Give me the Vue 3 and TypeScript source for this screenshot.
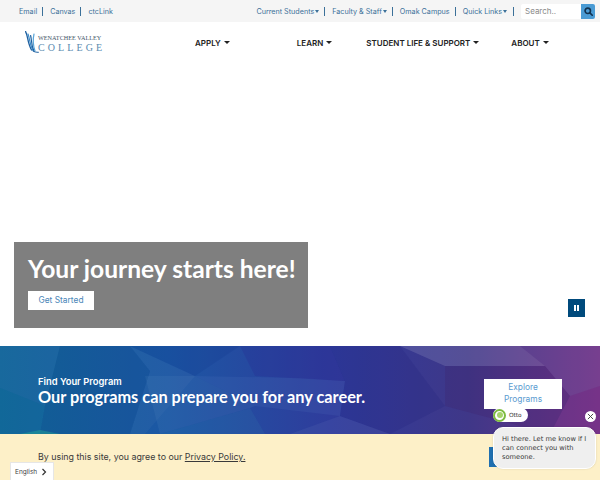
<template>
  <div class="page">
    <!-- Top bar -->
    <div class="topbar">
      <nav class="top-left">
        <a v-for="l in leftLinks" :key="l" class="top-link">{{ l }}</a>
      </nav>
      <nav class="top-right">
        <a v-for="l in rightLinks" :key="l.label" class="top-link">
          {{ l.label }}<span v-if="l.caret" class="mini-caret"></span>
        </a>
      </nav>
      <div class="search">
        <span class="search-input">Search..</span>
        <span class="search-btn">
          <svg width="9" height="9" viewBox="0 0 12 12" fill="none" stroke="#12324f" stroke-width="2.2">
            <circle cx="5" cy="5" r="3.6" />
            <path d="M7.8 7.8 11 11" stroke-linecap="round" />
          </svg>
        </span>
      </div>
    </div>

    <!-- Main header -->
    <header class="header">
      <div class="logo">
        <svg class="logo-mark" width="14" height="22" viewBox="0 0 14 22" fill="none" stroke-linecap="round">
          <path d="M0.6 0.6C3 5 2.4 12 6.5 19" stroke="#1d5f9f" stroke-width="1.3" />
          <path d="M3 3C5 8 4.4 13 8 19.5" stroke="#3b8ac9" stroke-width="1.2" />
          <path d="M5.6 4.5C6.8 9 6 14 9 20" stroke="#1d5f9f" stroke-width="1.2" />
          <path d="M9 3C7.8 8 8 14 10 20" stroke="#5aa5d8" stroke-width="1.2" />
          <path d="M8 20C9.5 21 11 21.3 13.4 21.3" stroke="#1d5f9f" stroke-width="1" />
        </svg>
        <div class="logo-text">
          <span class="logo-top">WENATCHEE VALLEY</span>
          <span class="logo-bottom">COLLEGE</span>
        </div>
      </div>
      <nav class="main-nav">
        <a class="nav-item apply">APPLY<span class="caret"></span></a>
        <a class="nav-item learn">LEARN<span class="caret"></span></a>
        <a class="nav-item life">STUDENT LIFE &amp; SUPPORT<span class="caret"></span></a>
        <a class="nav-item">ABOUT<span class="caret"></span></a>
      </nav>
    </header>

    <!-- Hero -->
    <section class="hero">
      <div class="caption">
        <h1>Your journey starts here!</h1>
        <a class="caption-btn">Get Started</a>
      </div>
      <button class="pause" aria-label="Pause">
        <span></span><span></span>
      </button>
    </section>

    <!-- Programs banner -->
    <section class="programs">
      <svg class="mosaic" viewBox="0 0 600 88" preserveAspectRatio="none">
        <defs>
          <linearGradient id="bannerGrad" x1="0" y1="0" x2="1" y2="0">
            <stop offset="0" stop-color="#11659a" />
            <stop offset="0.28" stop-color="#1c57a4" />
            <stop offset="0.55" stop-color="#2f3c9c" />
            <stop offset="0.78" stop-color="#3f3788" />
            <stop offset="1" stop-color="#6f3488" />
          </linearGradient>
        </defs>
        <rect width="600" height="88" fill="url(#bannerGrad)" />
        <polygon v-for="(p, i) in facets" :key="i" :points="p.points" :fill="p.fill" />
      </svg>
      <div class="programs-text">
        <p class="eyebrow">Find Your Program</p>
        <h2>Our programs can prepare you for any career.</h2>
      </div>
      <a class="explore">Explore<br />Programs</a>
    </section>

    <!-- Cookie notice -->
    <section class="notice">
      <p>By using this site, you agree to our <u>Privacy Policy.</u></p>
      <span class="notice-btn"></span>
    </section>

    <!-- Language picker -->
    <div class="lang">
      <span>English</span>
      <svg width="6" height="8" viewBox="0 0 6 8" fill="none" stroke="#333" stroke-width="1.2">
        <path d="M1.5 1 4.5 4 1.5 7" />
      </svg>
    </div>

    <!-- Chat widget -->
    <div class="otto">
      <span class="otto-avatar"><span></span></span>
      <span class="otto-name">Otto</span>
    </div>
    <button class="chat-close" aria-label="Close">
      <svg width="7" height="7" viewBox="0 0 8 8" stroke="#444" stroke-width="1.1">
        <path d="M1 1 7 7M7 1 1 7" />
      </svg>
    </button>
    <div class="chat-bubble">Hi there. Let me know if I can connect you with someone.</div>
  </div>
</template>

<script setup lang="ts">
type TopLink = { label: string; caret?: boolean }

const leftLinks = ['Email', 'Canvas', 'ctcLink']

const rightLinks: TopLink[] = [
  { label: 'Current Students', caret: true },
  { label: 'Faculty & Staff', caret: true },
  { label: 'Omak Campus' },
  { label: 'Quick Links', caret: true }
]

// background facets of the banner
const facets = [
  { points: '0,0 60,0 45,60 0,42', fill: 'rgba(255,255,255,0.03)' },
  { points: '60,0 130,0 150,25 130,88 40,88 45,60', fill: 'rgba(0,40,90,0.08)' },
  { points: '130,0 195,30 145,88 130,88 150,25', fill: 'rgba(255,255,255,0.03)' },
  { points: '130,0 240,0 195,30', fill: 'rgba(0,30,120,0.12)' },
  { points: '145,30 195,30 255,60 250,62 160,88', fill: 'rgba(120,170,210,0.10)' },
  { points: '195,30 300,32 345,35 340,70 255,60', fill: 'rgba(90,130,200,0.14)' },
  { points: '240,0 330,0 345,35 255,30', fill: 'rgba(40,30,140,0.20)' },
  { points: '160,88 250,62 265,88', fill: 'rgba(60,170,190,0.10)' },
  { points: '330,0 400,0 445,60 390,88 340,70 345,35', fill: 'rgba(20,20,110,0.14)' },
  { points: '400,0 445,20 545,20 520,0', fill: 'rgba(255,255,255,0.12)' },
  { points: '445,20 545,20 570,50 550,88 445,60', fill: 'rgba(60,20,90,0.16)' },
  { points: '520,0 600,0 600,40 570,50 545,20', fill: 'rgba(255,255,255,0.06)' },
  { points: '570,50 600,40 600,88 550,88', fill: 'rgba(150,50,140,0.20)' },
  { points: '0,42 45,60 40,88 0,88', fill: 'rgba(20,140,150,0.10)' },
  { points: '20,88 40,84 60,88', fill: 'rgba(40,180,150,0.4)' },
  { points: '340,70 390,88 290,88', fill: 'rgba(120,140,200,0.12)' }
]
</script>

<style scoped>
.page {
  position: relative;
  width: 600px;
  height: 480px;
  overflow: hidden;
  background: #fff;
  font-family: 'Inter', 'Liberation Sans', sans-serif;
}

.topbar {
  display: flex;
  align-items: center;
  height: 22px;
  padding: 0 5px 0 19px;
  background: #f5f5f5;
  font-size: 7.2px;
  color: #3b7099;
}
.top-left { display: flex; flex: 1; }
.top-left .top-link { padding-right: 5px; margin-right: 7px; border-right: 1px solid #3b7099; line-height: 9px; }
.top-left .top-link:last-child { border-right: none; }
.top-right { display: flex; }
.top-right .top-link {
  display: flex;
  align-items: center;
  padding-right: 5px;
  margin-right: 7px;
  border-right: 1px solid #3b7099;
  line-height: 9px;
  white-space: nowrap;
}
.top-right .top-link:last-child { padding-right: 6px; }
.mini-caret {
  width: 0;
  height: 0;
  margin-left: 1px;
  border-left: 2.5px solid transparent;
  border-right: 2.5px solid transparent;
  border-top: 3px solid #3b7099;
}

.search {
  display: flex;
  width: 74px;
  height: 15px;
  background: #fff;
  border-radius: 2px;
  overflow: hidden;
}
.search-input { flex: 1; padding-left: 4px; font-size: 8px; line-height: 15px; color: #8a8a8a; }
.search-btn {
  display: flex;
  align-items: center;
  justify-content: center;
  width: 14px;
  background: #4a9bd4;
}

.header {
  display: flex;
  align-items: center;
  height: 41px;
  padding-left: 25px;
}
.logo { display: flex; align-items: center; width: 170px; flex-shrink: 0; }
.logo-mark { flex-shrink: 0; margin-top: -2px; }
.logo-text { display: flex; flex-direction: column; margin-left: -1px; margin-top: 1px; font-family: 'Liberation Serif', serif; color: #3f5568; }
.logo-top { font-size: 6.2px; line-height: 8px; white-space: nowrap; }
.logo-bottom { font-size: 10px; line-height: 11px; letter-spacing: 3.1px; color: #5a8bb0; }

.main-nav { display: flex; align-items: center; font-size: 8px; font-weight: 600; color: #222; }
.nav-item { display: flex; align-items: center; white-space: nowrap; }
.apply { margin-right: 67px; }
.learn { margin-right: 34px; }
.life { margin-right: 32px; }
.caret {
  width: 0;
  height: 0;
  margin-left: 3px;
  border-left: 3px solid transparent;
  border-right: 3px solid transparent;
  border-top: 3px solid #222;
}

.hero { position: relative; height: 283px; }
.caption {
  position: absolute;
  left: 14px;
  top: 179px;
  width: 294px;
  height: 86px;
  padding: 12px 14px 0;
  box-sizing: border-box;
  background: #7f7f7f;
}
.caption h1 {
  margin: 0 0 7px;
  font-family: 'Lato', 'Liberation Sans', sans-serif;
  font-size: 24.6px;
  line-height: 30px;
  font-weight: 700;
  color: #fff;
  white-space: nowrap;
}
.caption-btn {
  display: block;
  width: 66px;
  height: 19px;
  background: #fff;
  font-size: 8.4px;
  line-height: 19px;
  text-align: center;
  color: #4a86b8;
}
.pause {
  position: absolute;
  left: 568px;
  top: 236px;
  display: flex;
  align-items: center;
  justify-content: center;
  gap: 1.5px;
  width: 17px;
  height: 18px;
  padding: 0;
  border: none;
  background: #004a7c;
}
.pause span { width: 2px; height: 6px; background: #fff; }

.programs {
  position: relative;
  display: flex;
  height: 88px;
  padding: 30px 0 0 38px;
  box-sizing: border-box;
  color: #fff;
}
.mosaic { position: absolute; left: 0; top: 0; width: 100%; height: 100%; }
.programs-text { position: relative; flex: 1; }
.eyebrow { margin: 0; font-size: 9.4px; line-height: 11px; font-weight: 600; }
.programs h2 {
  margin: 0;
  font-family: 'Lato', 'Liberation Sans', sans-serif;
  font-size: 16.35px;
  line-height: 20px;
  font-weight: 700;
  white-space: nowrap;
}
.explore {
  position: relative;
  width: 78px;
  height: 30px;
  margin: 3px 38px 0 0;
  padding: 3px 0;
  box-sizing: border-box;
  background: #fff;
  font-size: 8.4px;
  line-height: 11.5px;
  text-align: center;
  color: #5a9bd0;
}

.notice {
  position: relative;
  display: flex;
  height: 46px;
  padding: 17px 0 0 38px;
  box-sizing: border-box;
  background: #fdf0c8;
}
.notice p { margin: 0; font-size: 8.85px; line-height: 12px; color: #3a3a3a; }
.notice-btn {
  position: absolute;
  left: 489px;
  top: 13px;
  width: 20px;
  height: 20px;
  background: #1f6fb0;
}

.lang {
  position: absolute;
  left: 10px;
  top: 462px;
  display: flex;
  align-items: center;
  justify-content: space-between;
  width: 44px;
  height: 18px;
  padding: 0 6px 0 4px;
  box-sizing: border-box;
  background: #fff;
  border: 1px solid #e6e6e6;
  border-bottom: none;
  font-size: 6.5px;
  color: #444;
}

.otto {
  position: absolute;
  left: 493px;
  top: 408px;
  display: flex;
  align-items: center;
  height: 14px;
  padding-right: 6px;
  background: #fff;
  border-radius: 7px;
}
.otto-avatar {
  display: flex;
  align-items: center;
  justify-content: center;
  width: 13px;
  height: 13px;
  border-radius: 50%;
  background: #fff;
  border: 2px solid #7dbb3f;
  box-sizing: border-box;
}
.otto-avatar span { width: 6px; height: 6px; border-radius: 50%; background: #a6d36c; }
.otto-name { margin-left: 3px; font-family: 'DejaVu Sans', sans-serif; font-size: 5.8px; color: #333; }

.chat-close {
  position: absolute;
  left: 585px;
  top: 411px;
  display: flex;
  align-items: center;
  justify-content: center;
  width: 11px;
  height: 11px;
  padding: 0;
  border: none;
  border-radius: 50%;
  background: #fff;
}

.chat-bubble {
  position: absolute;
  left: 493px;
  top: 427px;
  width: 103px;
  height: 42px;
  padding: 7px 7px 0 8px;
  box-sizing: border-box;
  background: #efefef;
  border: 1px solid #fff;
  border-radius: 10px;
  box-shadow: 0 0 2px rgba(0, 0, 0, 0.15);
  font-family: 'DejaVu Sans', sans-serif;
  font-size: 6.7px;
  line-height: 9px;
  color: #3a3a3a;
}
</style>

<style>
html, body { margin: 0; overflow: hidden; }
</style>
